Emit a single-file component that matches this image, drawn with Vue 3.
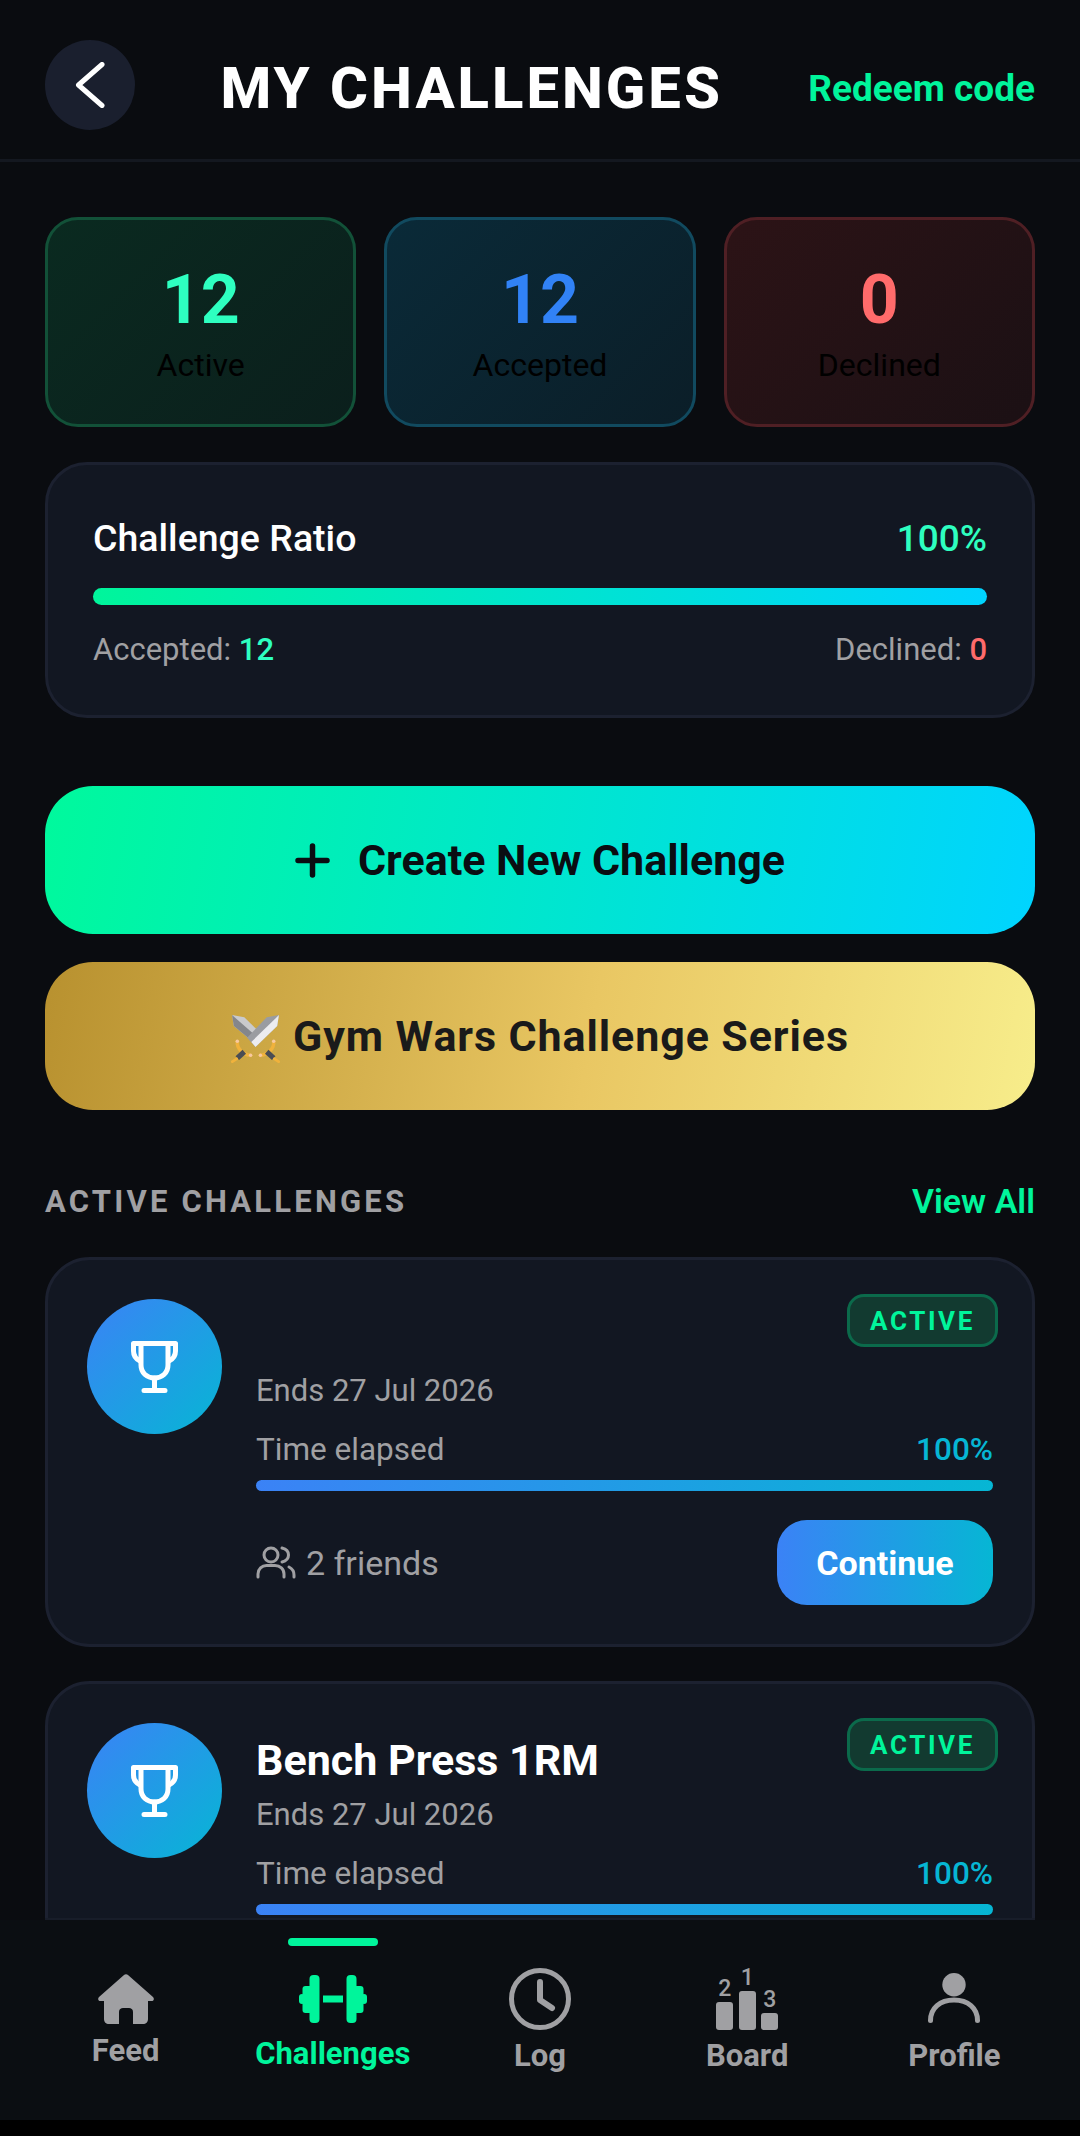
<template>
  <div class="page">
    <header class="topbar">
      <button class="back-btn">
        <svg width="30" height="46" viewBox="0 0 30 46" fill="none" stroke="#fff" stroke-width="5" stroke-linecap="round" stroke-linejoin="round"><path d="M27 2.5 L3.5 23 L27 43.5"/></svg>
      </button>
      <h1 class="title">MY CHALLENGES</h1>
      <a class="redeem">Redeem code</a>
    </header>

    <main class="content">
      <section class="stats">
        <div v-for="s in stats" :key="s.label" class="stat" :class="s.cls">
          <div class="stat-value">{{ s.value }}</div>
          <div class="stat-label">{{ s.label }}</div>
        </div>
      </section>

      <section class="ratio">
        <div class="ratio-head">
          <span class="ratio-title">Challenge Ratio</span>
          <span class="ratio-pct">100%</span>
        </div>
        <div class="ratio-bar"></div>
        <div class="ratio-foot">
          <span>Accepted: <b class="mint">12</b></span>
          <span>Declined: <b class="coral">0</b></span>
        </div>
      </section>

      <button class="cta create">
        <svg width="35" height="35" viewBox="0 0 35 35" fill="none" stroke="#0a0d12" stroke-width="5.5" stroke-linecap="round"><path d="M17.500 3V32M3 17.500H32"/></svg>
        <span>Create New Challenge</span>
      </button>
      <button class="cta wars">
        <!-- crossed swords emoji -->
        <svg class="swords" width="49" height="49" viewBox="0 0 140 140">
          <path d="M3 3 L38 9 L92 62 L70 86 L8 34 Z" fill="#c9cacd"/>
          <path d="M3 3 L82 72 L70 86 L8 34 Z" fill="#84868b"/>
          <path d="M137 3 L102 9 L46 68 L70 94 L132 34 Z" fill="#9a9ca1"/>
          <path d="M137 3 L58 80 L70 94 L132 34 Z" fill="#ececef"/>
          <path d="M18 80 C16 98 36 118 56 118" fill="none" stroke="#f0b23c" stroke-width="10" stroke-linecap="round"/>
          <path d="M122 80 C124 98 104 118 84 118" fill="none" stroke="#f0b23c" stroke-width="10" stroke-linecap="round"/>
          <circle cx="18" cy="78" r="5" fill="#f7c9a0"/>
          <circle cx="122" cy="78" r="5" fill="#f7c9a0"/>
          <circle cx="56" cy="118" r="5" fill="#f7c9a0"/>
          <circle cx="84" cy="118" r="5" fill="#f7c9a0"/>
          <path d="M38 108 L18 126" stroke="#4a4d54" stroke-width="15"/>
          <path d="M102 108 L122 126" stroke="#4a4d54" stroke-width="15"/>
          <path d="M16 128 L4 136" stroke="#f0b23c" stroke-width="8" stroke-linecap="round"/>
          <path d="M124 128 L136 136" stroke="#f0b23c" stroke-width="8" stroke-linecap="round"/>
        </svg>
        <span>Gym Wars Challenge Series</span>
      </button>

      <div class="section-head">
        <span class="section-title">ACTIVE CHALLENGES</span>
        <a class="view-all">View All</a>
      </div>

      <article v-for="c in challenges" :key="c.id" class="card">
        <span class="badge">ACTIVE</span>
        <div class="avatar">
          <svg width="47" height="52" viewBox="0 0 47 52" fill="none" stroke="#fff" stroke-width="5" stroke-linecap="round" stroke-linejoin="round">
            <path d="M10 2.5H2.5V10C2.5 15 5 18 9 20M37 2.5H44.5V10C44.5 15 42 18 38 20"/>
            <path d="M10 2.5H37V24C37 32 31 37 23.5 37C16 37 10 32 10 24Z"/>
            <path d="M23.5 37V49M13 49.500H34"/>
          </svg>
        </div>
        <div class="card-body">
          <h2 class="card-title">{{ c.name }}</h2>
          <div class="ends">Ends 27 Jul 2026</div>
          <div class="elapsed">
            <span>Time elapsed</span>
            <span class="elapsed-pct">100%</span>
          </div>
          <div class="elapsed-bar"></div>
          <div v-if="c.friends" class="card-foot">
            <span class="friends">
              <svg width="40" height="33" viewBox="0 0 40 33" fill="none" stroke="#a0a0a3" stroke-width="3" stroke-linecap="round">
                <circle cx="15" cy="9" r="7"/>
                <path d="M2 31V28C2 23 6 19.5 10.5 19.5H19C24 19.5 28 23 28 28V31"/>
                <path d="M26 2C30 3 32.5 5.5 32.5 9C32.5 12.5 30 15 26 16"/>
                <path d="M33 21C36 22.5 38 25 38 29V31"/>
              </svg>
              {{ c.friends }} friends
            </span>
            <button class="continue">Continue</button>
          </div>
        </div>
      </article>
    </main>

    <nav class="bottom-nav">
      <div v-for="n in nav" :key="n.label" class="nav-item" :class="{ on: n.on }">
        <span v-if="n.on" class="nav-marker"></span>
        <svg v-if="n.label === 'Feed'" width="56" height="52" viewBox="0 0 56 52" fill="#a0a0a3">
          <path d="M26 2 C27 1 29 1 30 2 L55 24 C56.500 25.500 56 28 53.500 28 H50 V46 C50 49 48 51 45 51 H35 V39 C35 36 33 35 31 35 H25 C23 35 21 36 21 39 V51 H11 C8 51 6 49 6 46 V28 H2.500 C0 28 -0.500 25.500 1 24 Z"/>
        </svg>
        <svg v-else-if="n.label === 'Challenges'" width="68" height="58" viewBox="0 0 68 58" fill="#00f59b">
          <rect x="10.500" y="5" width="10" height="48" rx="4"/>
          <rect x="47.500" y="5" width="10" height="48" rx="4"/>
          <rect x="3.500" y="16" width="10" height="27" rx="3"/>
          <rect x="54.500" y="16" width="10" height="27" rx="3"/>
          <rect x="0" y="24" width="6" height="10" rx="3"/>
          <rect x="62" y="24" width="6" height="10" rx="3"/>
          <rect x="24" y="25.500" width="20" height="7"/>
        </svg>
        <svg v-else-if="n.label === 'Log'" width="62" height="62" viewBox="0 0 62 62" fill="none" stroke="#a0a0a3" stroke-width="5" stroke-linecap="round" stroke-linejoin="round">
          <circle cx="31" cy="31" r="28.500"/>
          <path d="M31 14V32L43 40" stroke-width="6"/>
        </svg>
        <div v-else-if="n.label === 'Board'" class="podium">
          <div class="pod"><i>2</i><b class="p2"></b></div>
          <div class="pod"><i>1</i><b class="p1"></b></div>
          <div class="pod"><i>3</i><b class="p3"></b></div>
        </div>
        <svg v-else width="52" height="62" viewBox="0 0 52 62" fill="none" stroke="#a0a0a3" stroke-width="5" stroke-linecap="round">
          <circle cx="26" cy="16.700" r="11.700" fill="#a0a0a3" stroke="none"/>
          <path d="M2.500 52.500C2.500 40 12 32 26 32C40 32 49.500 40 49.500 52.500"/>
        </svg>
        <span class="nav-label">{{ n.label }}</span>
      </div>
    </nav>
    <div class="gesture-strip"></div>
  </div>
</template>

<script setup>
const stats = [
  { value: 12, label: 'Active', cls: 'green' },
  { value: 12, label: 'Accepted', cls: 'blue' },
  { value: 0, label: 'Declined', cls: 'red' }
]

// second card runs under the nav, its footer is never on screen
const challenges = [
  { id: 1, name: '', friends: 2 },
  { id: 2, name: 'Bench Press 1RM' }
]

const nav = [
  { label: 'Feed' },
  { label: 'Challenges', on: true },
  { label: 'Log' },
  { label: 'Board' },
  { label: 'Profile' }
]
</script>

<style>
html, body { margin: 0; background: #000; }
</style>

<style scoped>
.page {
  width: 1080px;
  height: 2136px;
  display: flex;
  flex-direction: column;
  overflow: hidden;
  background: #0a0c10;
  font-family: Roboto, "Liberation Sans", sans-serif;
  color: #fff;
}
button { border: 0; font-family: inherit; padding: 0; }

.topbar {
  height: 162px;
  box-sizing: border-box;
  flex: none;
  display: flex;
  align-items: center;
  justify-content: space-between;
  padding: 10px 45px 0;
  border-bottom: 3px solid #141820;
}
.back-btn {
  width: 90px;
  height: 90px;
  border-radius: 50%;
  background: #1a1f2e;
  display: flex;
  align-items: center;
  justify-content: center;
}
.title {
  margin: 7px 0 0;
  font-size: 58px;
  font-weight: 800;
  letter-spacing: 3px;
}
.redeem { margin-top: 7px; font-size: 37px; font-weight: 700; color: #00f59b; }

.content {
  flex: 1;
  min-height: 0;
  overflow: hidden;
  padding: 55px 45px 0;
}

.stats { display: grid; grid-template-columns: repeat(3, 1fr); gap: 28px; }
.stat {
  height: 210px;
  box-sizing: border-box;
  border-radius: 33px;
  border: 3px solid;
  display: flex;
  flex-direction: column;
  align-items: center;
  padding-top: 40px;
}
.stat-value { font-size: 68px; font-weight: 700; line-height: 80px; }
.stat-label { font-size: 32px; line-height: 40px; color: #000; margin-top: 5px; }
.green { background: linear-gradient(135deg, #0a2a20, #0b1f1c); border-color: #125138; }
.green .stat-value { color: #2effc0; }
.blue { background: linear-gradient(135deg, #0a2a38, #0b1e28); border-color: #114a5f; }
.blue .stat-value { color: #3182f6; }
.red { background: linear-gradient(135deg, #2c1316, #1b1014); border-color: #4f1f24; }
.red .stat-value { color: #ff6b6b; }

.ratio {
  margin-top: 35px;
  height: 256px;
  box-sizing: border-box;
  padding: 49px 45px 0 45px;
  border-radius: 42px;
  background: #121722;
  border: 3px solid #1c2130;
}
.ratio-head { display: flex; justify-content: space-between; align-items: center; }
.ratio-title { font-size: 37.500px; font-weight: 500; line-height: 48px; }
.ratio-pct { font-size: 37px; font-weight: 500; color: #2effc0; }
.ratio-bar {
  height: 17px;
  margin-top: 26px;
  border-radius: 9px;
  background: linear-gradient(90deg, #00f59b, #00d4ff);
}
.ratio-foot {
  display: flex;
  justify-content: space-between;
  margin-top: 26px;
  font-size: 31px;
  line-height: 38px;
  color: #a0a0a3;
}
.ratio-foot b { font-weight: 500; }
.mint { color: #2effc0; }
.coral { color: #ff6b6b; }

.cta {
  width: 100%;
  height: 148px;
  border-radius: 48px;
  display: flex;
  align-items: center;
  justify-content: center;
  font-size: 43px;
  font-weight: 700;
}
.create {
  margin-top: 68px;
  gap: 28px;
  background: linear-gradient(100deg, #00f99c, #00d4ff);
  color: #0a0d12;
}
.wars {
  margin-top: 28px;
  gap: 13px;
  background: linear-gradient(100deg, #b8912f, #e9c763 55%, #f7ed8b);
  color: #1a1a1a;
  letter-spacing: 0.9px;
}
.swords { margin-top: 5px; }

.section-head {
  margin-top: 69px;
  display: flex;
  justify-content: space-between;
  align-items: center;
  height: 44px;
}
.section-title { font-size: 31px; font-weight: 700; letter-spacing: 3.2px; color: #a0a0a3; }
.view-all { font-size: 34px; font-weight: 600; color: #00f59b; }

.card {
  position: relative;
  margin-top: 34px;
  height: 390px;
  box-sizing: border-box;
  display: flex;
  gap: 34px;
  padding: 39px 39px 0 39px;
  border-radius: 45px;
  background: #121722;
  border: 3px solid #1c2130;
}
.card + .card { margin-top: 34px; }
.badge {
  position: absolute;
  top: 34px;
  right: 34px;
  width: 151px;
  height: 53px;
  box-sizing: border-box;
  display: flex;
  align-items: center;
  justify-content: center;
  border-radius: 17px;
  background: #123a30;
  border: 3px solid #0b6a4b;
  color: #00f59b;
  font-size: 26px;
  font-weight: 700;
  letter-spacing: 2.6px;
}
.avatar {
  flex: none;
  width: 135px;
  height: 135px;
  border-radius: 50%;
  background: linear-gradient(135deg, #3b82f6, #06b6d4);
  display: flex;
  align-items: center;
  justify-content: center;
}
.card-body { flex: 1; min-width: 0; padding-top: 11px; }
.card-title { margin: 0; height: 52px; font-size: 43px; line-height: 52px; font-weight: 700; }
.ends { margin-top: 9px; font-size: 31px; line-height: 40px; color: #a0a0a3; }
.elapsed {
  display: flex;
  justify-content: space-between;
  margin-top: 19px;
  font-size: 31.500px;
  line-height: 40px;
  color: #a0a0a3;
}
.elapsed-pct { color: #06b6d4; font-weight: 500; }
.elapsed-bar {
  height: 11px;
  margin-top: 10px;
  border-radius: 6px;
  background: linear-gradient(90deg, #3b82f6, #06b6d4);
}
.card-foot { display: flex; justify-content: space-between; align-items: center; margin-top: 29px; }
.friends { display: flex; align-items: center; gap: 10px; font-size: 34px; color: #a0a0a3; }
.continue {
  width: 216px;
  height: 85px;
  border-radius: 30px;
  background: linear-gradient(90deg, #3b82f6, #06b6d4);
  color: #fff;
  font-size: 34px;
  font-weight: 700;
}

.bottom-nav {
  position: relative;
  flex: none;
  height: 200px;
  box-sizing: border-box;
  padding: 0 22px;
  display: grid;
  grid-template-columns: repeat(5, 1fr);
  background: #0b0e12;
}
/* the faint line where the card list ends */
.bottom-nav::before {
  content: "";
  position: absolute;
  top: -2px;
  left: 45px;
  right: 45px;
  height: 2px;
  background: #181d29;
}
.nav-item {
  position: relative;
  display: flex;
  flex-direction: column;
  align-items: center;
  justify-content: center;
  gap: 6px;
  padding-top: 4px;
  color: #a0a0a3;
}
.nav-item.on { color: #00f59b; }
.nav-label { font-size: 31px; line-height: 40px; font-weight: 700; }
.nav-marker {
  position: absolute;
  top: 18px;
  left: 50%;
  width: 90px;
  height: 8px;
  margin-left: -45px;
  border-radius: 4px;
  background: #00f59b;
}
.podium { display: flex; align-items: flex-end; gap: 5.500px; height: 62px; }
.pod { width: 17px; display: flex; flex-direction: column; align-items: center; }
.pod i { font-style: normal; font-size: 23px; line-height: 16px; font-weight: 500; }
.pod b { display: block; width: 17px; background: #a0a0a3; border-radius: 3px; margin-top: 5px; }
.p1 { height: 39px; }
.p2 { height: 28px; }
.p3 { height: 17px; }
.gesture-strip { flex: none; height: 16px; background: #000; }
</style>
